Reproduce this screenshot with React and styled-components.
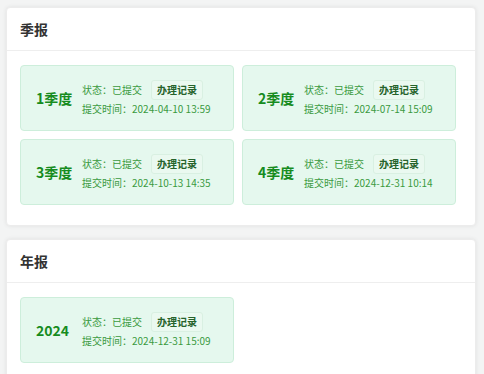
import React from 'react';
import styled, { createGlobalStyle } from 'styled-components';

const GlobalStyle = createGlobalStyle`
  body {
    margin: 0;
    background: #f3f4f4;
    font-family: "Noto Sans CJK SC", "Noto Sans", sans-serif;
  }
`;

const Page = styled.div`
  padding: 7px 8px 0 6px;
  display: flex;
  flex-direction: column;
  gap: 13px;
`;

const Card = styled.div`
  background: #fff;
  border-radius: 4px;
  box-shadow: 0 0 4px rgba(0, 0, 0, 0.08);
  border: 1px solid #ececec;
`;

const CardHeader = styled.div`
  height: 42px;
  display: flex;
  align-items: center;
  padding-left: 13px;
  font-size: 14px;
  font-weight: 700;
  color: #333;
  border-bottom: 1px solid #eeeeee;
`;

const CardBody = styled.div`
  padding: 14px 13px 20px;
  display: grid;
  grid-template-columns: repeat(2, 214px);
  gap: 8px;
`;

const Tile = styled.div`
  height: 66px;
  box-sizing: border-box;
  background: #e5f8ee;
  border: 1px solid #cdeedb;
  border-radius: 4px;
  display: flex;
  align-items: center;
  padding-left: 15px;
`;

const Label = styled.div`
  width: 46px;
  flex-shrink: 0;
  font-size: 14px;
  font-weight: 700;
  color: #168c1e;
  white-space: nowrap;
`;

const Info = styled.div`
  display: flex;
  flex-direction: column;
  gap: 2px;
  font-size: 10px;
  color: #3a9a3e;
`;

const InfoRow = styled.div`
  display: flex;
  align-items: center;
  gap: 9px;
  white-space: nowrap;
  line-height: 14px;
`;

const RecordButton = styled.span`
  display: inline-flex;
  align-items: center;
  height: 18px;
  padding: 0 5px;
  border-radius: 3px;
  background: #eaf9f0;
  border: 1px solid #d9f0e2;
  font-size: 10px;
  font-weight: 700;
  color: #25632b;
`;

const quarters = [
  { label: '1季度', time: '2024-04-10 13:59' },
  { label: '2季度', time: '2024-07-14 15:09' },
  { label: '3季度', time: '2024-10-13 14:35' },
  { label: '4季度', time: '2024-12-31 10:14' },
];

const annual = [{ label: '2024', time: '2024-12-31 15:09' }];

function ReportTile({ item }) {
  return (
    <Tile>
      <Label>{item.label}</Label>
      <Info>
        <InfoRow>
          <span>状态：已提交</span>
          <RecordButton>办理记录</RecordButton>
        </InfoRow>
        <InfoRow>提交时间：{item.time}</InfoRow>
      </Info>
    </Tile>
  );
}

function Section({ title, items }) {
  return (
    <Card>
      <CardHeader>{title}</CardHeader>
      <CardBody>
        {items.map((item) => (
          <ReportTile key={item.label} item={item} />
        ))}
      </CardBody>
    </Card>
  );
}

export default function App() {
  return (
    <>
      <GlobalStyle />
      <Page>
        <Section title="季报" items={quarters} />
        <Section title="年报" items={annual} />
      </Page>
    </>
  );
}
